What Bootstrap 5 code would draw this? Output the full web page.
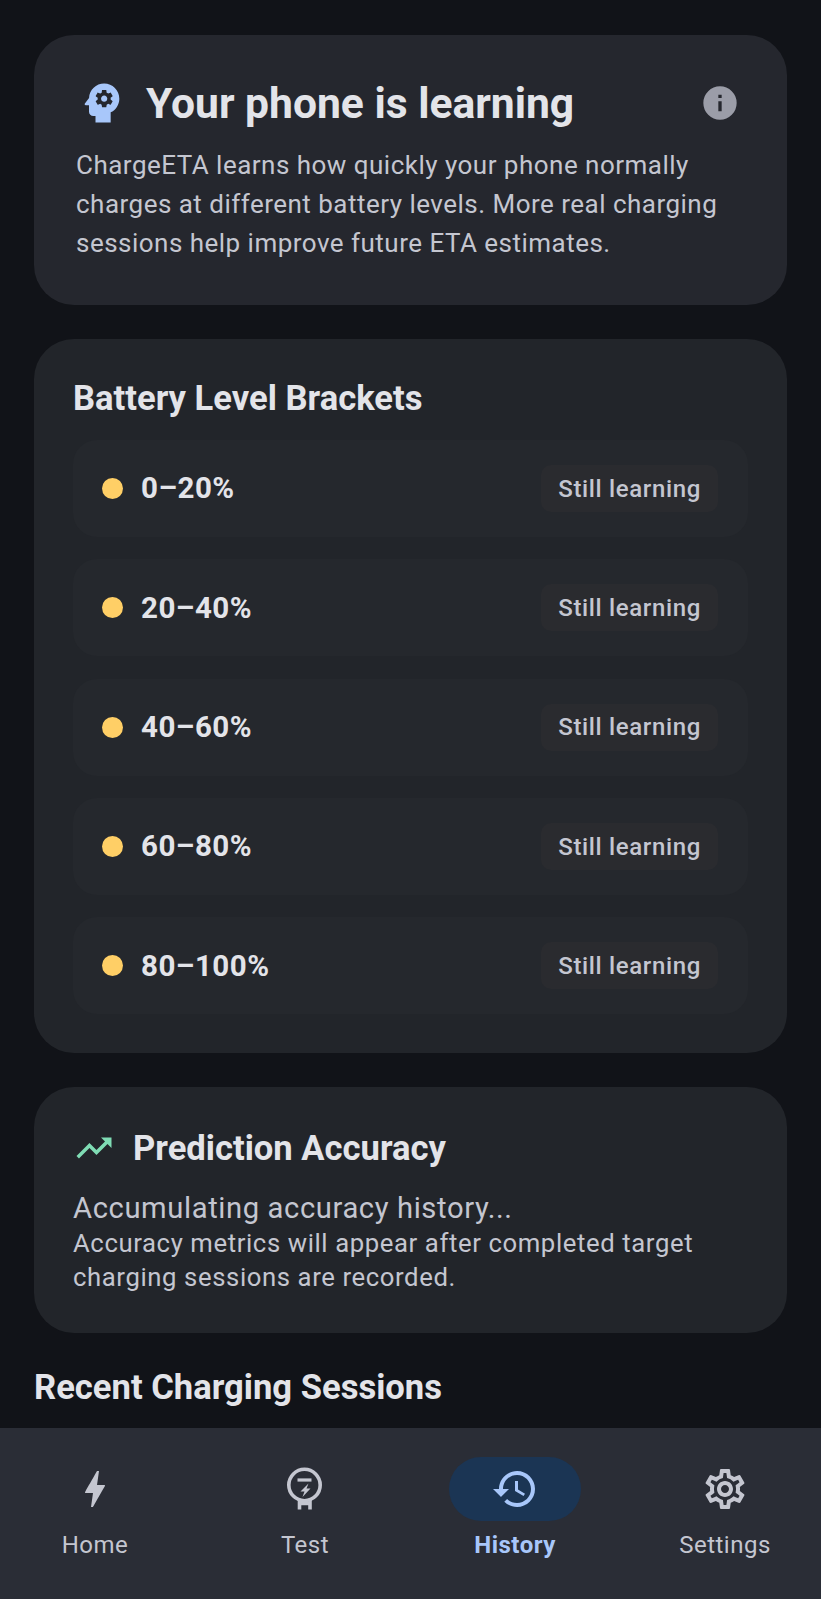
<!DOCTYPE html>
<html lang="en">
<head>
    <meta charset="UTF-8">
    <meta name="viewport" content="width=device-width, initial-scale=1.0">
    <title>ChargeETA History</title>
    <link rel="stylesheet" href="https://cdn.jsdelivr.net/npm/bootstrap@5.3.0/dist/css/bootstrap.min.css">
    <style>
        body { background: #111318; font-family: Roboto, "Liberation Sans", sans-serif; color: #e3e4e9; height: 1599px; overflow: hidden; }
        .app-main { padding: 35px 34px 0; gap: 34px; min-height: 0; }
        .panel { border-radius: 40px; background: #22252a; flex: none; }
        .panel-intro { background: #25272e; height: 270px; padding: 38px 42px 0; }
        .panel-brackets { height: 714px; padding: 37px 39px 0; }
        .panel-accuracy { height: 246px; padding: 39px 39px 0; }
        .intro-icon { margin-right: 18px; }
        .intro-info { margin-right: 5px; }
        .intro-title { font-size: 42.6px; font-weight: 700; line-height: 60px; margin: 0; }
        .intro-text { font-size: 26px; line-height: 38.8px; letter-spacing: .48px; color: #c4c6d0; margin: 13px 0 0; }
        .section-title { font-size: 34.6px; font-weight: 700; line-height: 44px; margin: 0; }
        .level-row { height: 97px; border-radius: 24px; background: #25282d; padding: 0 30px 0 29px; margin-top: 22.35px; }
        .section-title + .level-row { margin-top: 20px; }
        .level-dot { width: 21px; height: 21px; border-radius: 50%; background: #ffcf66; margin-right: 18px; }
        .level-name { font-size: 29.5px; font-weight: 700; letter-spacing: .5px; }
        .level-chip { background: #2a2b2f; border-radius: 10px; height: 47px; padding: 0 17px; font-size: 24px; font-weight: 500; letter-spacing: .65px; color: #c4c6d0; }
        .accuracy-icon { margin-right: 18px; }
        .accuracy-lead { font-size: 29.2px; line-height: 36px; letter-spacing: .6px; color: #c4c6d0; margin: 20px 0 0; }
        .accuracy-note { font-size: 25.7px; line-height: 34px; letter-spacing: .6px; color: #c4c6d0; margin: 0; }
        .recent-title { margin-top: -2px; }
        .bottom-bar { height: 171px; background: #2a2d36; flex: none; padding: 0 30px 0 29px; }
        .tab-item { width: 132px; padding-top: 29px; color: #c4c6d0; font-size: 24px; letter-spacing: .5px; }
        .tab-icon { width: 132px; height: 64px; border-radius: 32px; margin-bottom: 6px; }
        .tab-item.is-active { color: #a8c7fa; font-weight: 700; }
        .tab-item.is-active .tab-icon { background: #1b3554; }
    </style>
</head>
<body>
    <div class="d-flex flex-column vh-100">
        <main class="app-main d-flex flex-column flex-grow-1 overflow-hidden">
            <!-- Learning intro -->
            <section class="panel panel-intro">
                <div class="d-flex align-items-center">
                    <svg width="52" height="52" viewBox="0 0 24 24" fill="#a8c7fa" class="intro-icon">
                        <path d="M13 8.57c-.79 0-1.43.64-1.43 1.43s.64 1.43 1.43 1.43 1.43-.64 1.43-1.43-.64-1.43-1.43-1.43z"/>
                        <path d="M13 3C9.25 3 6.2 5.94 6.02 9.64L4.1 12.2c-.25.33-.01.8.4.8H6v3c0 1.1.9 2 2 2h1v3h7v-4.68c2.36-1.12 4-3.53 4-6.32 0-3.87-3.13-7-7-7zm3 7c0 .13-.01.26-.02.39l.83.66c.08.06.1.16.05.25l-.8 1.39c-.05.09-.16.12-.24.09l-.99-.4c-.21.16-.43.29-.67.39L14 13.83c-.01.1-.1.17-.2.17h-1.6c-.1 0-.18-.07-.2-.17l-.15-1.06c-.25-.1-.47-.23-.68-.39l-.99.4c-.09.03-.2 0-.25-.09l-.8-1.39c-.05-.08-.03-.19.05-.25l.84-.66c-.01-.13-.02-.26-.02-.39s.02-.27.04-.39l-.85-.66c-.08-.06-.1-.16-.05-.26l.8-1.38c.05-.09.15-.12.24-.09l1 .4c.2-.15.43-.29.67-.39L12 6.17c.02-.1.1-.17.2-.17h1.6c.1 0 .18.07.2.17l.15 1.06c.24.1.46.23.67.39l1-.4c.09-.03.2 0 .24.09l.8 1.38c.05.09.03.2-.05.26l-.85.66c.03.12.04.25.04.39z"/>
                    </svg>
                    <h1 class="intro-title flex-grow-1">Your phone is learning</h1>
                    <svg width="40" height="40" viewBox="0 0 24 24" fill="#9b9da8" class="intro-info">
                        <path d="M12 2a10 10 0 1 0 0 20 10 10 0 0 0 0-20zm1 15h-2v-6h2v6zm0-8h-2V7h2v2z"/>
                    </svg>
                </div>
                <p class="intro-text">ChargeETA learns how quickly your phone normally charges at different battery levels. More real charging sessions help improve future ETA estimates.</p>
            </section>

            <!-- Brackets -->
            <section class="panel panel-brackets">
                <h2 class="section-title">Battery Level Brackets</h2>
                <div class="level-row d-flex align-items-center">
                    <span class="level-dot"></span><span class="level-name flex-grow-1">0–20%</span>
                    <span class="level-chip d-flex align-items-center">Still learning</span>
                </div>
                <div class="level-row d-flex align-items-center">
                    <span class="level-dot"></span><span class="level-name flex-grow-1">20–40%</span>
                    <span class="level-chip d-flex align-items-center">Still learning</span>
                </div>
                <div class="level-row d-flex align-items-center">
                    <span class="level-dot"></span><span class="level-name flex-grow-1">40–60%</span>
                    <span class="level-chip d-flex align-items-center">Still learning</span>
                </div>
                <div class="level-row d-flex align-items-center">
                    <span class="level-dot"></span><span class="level-name flex-grow-1">60–80%</span>
                    <span class="level-chip d-flex align-items-center">Still learning</span>
                </div>
                <div class="level-row d-flex align-items-center">
                    <span class="level-dot"></span><span class="level-name flex-grow-1">80–100%</span>
                    <span class="level-chip d-flex align-items-center">Still learning</span>
                </div>
            </section>

            <!-- Accuracy -->
            <section class="panel panel-accuracy">
                <div class="d-flex align-items-center">
                    <svg width="42" height="42" viewBox="0 0 24 24" fill="#7fdcb4" class="accuracy-icon">
                        <path d="M16 6l2.29 2.29-4.88 4.88-4-4L2 16.59 3.41 18l6-6 4 4 6.3-6.29L22 12V6z"/>
                    </svg>
                    <h2 class="section-title">Prediction Accuracy</h2>
                </div>
                <p class="accuracy-lead">Accumulating accuracy history...</p>
                <p class="accuracy-note">Accuracy metrics will appear after completed target charging sessions are recorded.</p>
            </section>

            <h2 class="section-title recent-title">Recent Charging Sessions</h2>
        </main>

        <nav class="bottom-bar d-flex justify-content-between">
            <div class="tab-item d-flex flex-column align-items-center">
                <div class="tab-icon d-flex align-items-center justify-content-center">
                    <svg width="48" height="48" viewBox="0 0 24 24" fill="#c4c6d0"><path d="M11 21h-1l1-7H7.5c-.58 0-.57-.32-.38-.66.19-.34.05-.08.07-.12C8.48 10.94 10.42 7.54 13 3h1l-1 7h3.5c.49 0 .56.33.47.51l-.07.15C12.96 17.55 11 21 11 21z"/></svg>
                </div>
                <span>Home</span>
            </div>
            <div class="tab-item d-flex flex-column align-items-center">
                <div class="tab-icon d-flex align-items-center justify-content-center">
                    <svg width="40" height="44" viewBox="0 0 40 44" fill="none" stroke="#c4c6d0" stroke-width="3.6">
                        <circle cx="19.5" cy="18" r="15.7"/>
                        <path d="M14.5 33v9.5M25 33v9.5M13 36.5h13.5" stroke-width="3.6"/>
                        <path d="M12.5 13h14" stroke-width="3.2"/>
                        <path d="M23.5 16.5l-8 8h4l-2 5.5 8-8.5h-4z" fill="#c4c6d0" stroke="none"/>
                    </svg>
                </div>
                <span>Test</span>
            </div>
            <div class="tab-item is-active d-flex flex-column align-items-center">
                <div class="tab-icon d-flex align-items-center justify-content-center">
                    <svg width="48" height="48" viewBox="0 0 24 24" fill="#a8c7fa"><path d="M13 3c-4.97 0-9 4.03-9 9H1l3.89 3.89.07.14L9 12H6c0-3.87 3.13-7 7-7s7 3.13 7 7-3.13 7-7 7c-1.93 0-3.68-.79-4.94-2.06l-1.42 1.42C8.27 19.99 10.51 21 13 21c4.97 0 9-4.03 9-9s-4.03-9-9-9zm-1 5v5l4.28 2.54.72-1.21-3.5-2.08V8H12z"/></svg>
                </div>
                <span>History</span>
            </div>
            <div class="tab-item d-flex flex-column align-items-center">
                <div class="tab-icon d-flex align-items-center justify-content-center">
                    <svg width="48" height="48" viewBox="0 0 24 24" fill="#c4c6d0"><path d="M19.43 12.98c.04-.32.07-.64.07-.98 0-.34-.03-.66-.07-.98l2.11-1.65c.19-.15.24-.42.12-.64l-2-3.46c-.09-.16-.26-.25-.44-.25-.06 0-.12.01-.17.03l-2.49 1c-.52-.4-1.08-.73-1.69-.98l-.38-2.65C14.46 2.18 14.25 2 14 2h-4c-.25 0-.46.18-.49.42l-.38 2.65c-.61.25-1.17.59-1.69.98l-2.49-1c-.06-.02-.12-.03-.18-.03-.17 0-.34.09-.43.25l-2 3.46c-.13.22-.07.49.12.64l2.11 1.65c-.04.32-.07.65-.07.98 0 .33.03.66.07.98l-2.11 1.65c-.19.15-.24.42-.12.64l2 3.46c.09.16.26.25.44.25.06 0 .12-.01.17-.03l2.49-1c.52.4 1.08.73 1.69.98l.38 2.65c.03.24.24.42.49.42h4c.25 0 .46-.18.49-.42l.38-2.65c.61-.25 1.17-.59 1.69-.98l2.49 1c.06.02.12.03.18.03.17 0 .34-.09.43-.25l2-3.46c.12-.22.07-.49-.12-.64l-2.11-1.65zm-1.98-1.71c.04.31.05.52.05.73 0 .21-.02.43-.05.73l-.14 1.13.89.7 1.08.84-.7 1.21-1.27-.51-1.04-.42-.9.68c-.43.32-.84.56-1.25.73l-1.06.43-.16 1.13-.2 1.35h-1.4l-.19-1.35-.16-1.13-1.06-.43c-.43-.18-.83-.41-1.23-.71l-.91-.7-1.06.43-1.27.51-.7-1.21 1.08-.84.89-.7-.14-1.13c-.03-.31-.05-.54-.05-.74s.02-.43.05-.73l.14-1.13-.89-.7-1.08-.84.7-1.21 1.27.51 1.04.42.9-.68c.43-.32.84-.56 1.25-.73l1.06-.43.16-1.13.2-1.35h1.39l.19 1.35.16 1.13 1.06.43c.43.18.83.41 1.23.71l.91.7 1.06-.43 1.27-.51.7 1.21-1.07.85-.89.7.14 1.13zM12 8c-2.21 0-4 1.79-4 4s1.79 4 4 4 4-1.79 4-4-1.79-4-4-4zm0 6c-1.1 0-2-.9-2-2s.9-2 2-2 2 .9 2 2-.9 2-2 2z"/></svg>
                </div>
                <span>Settings</span>
            </div>
        </nav>
    </div>

    <script src="https://cdn.jsdelivr.net/npm/bootstrap@5.3.0/dist/js/bootstrap.bundle.min.js"></script>
</body>
</html>
